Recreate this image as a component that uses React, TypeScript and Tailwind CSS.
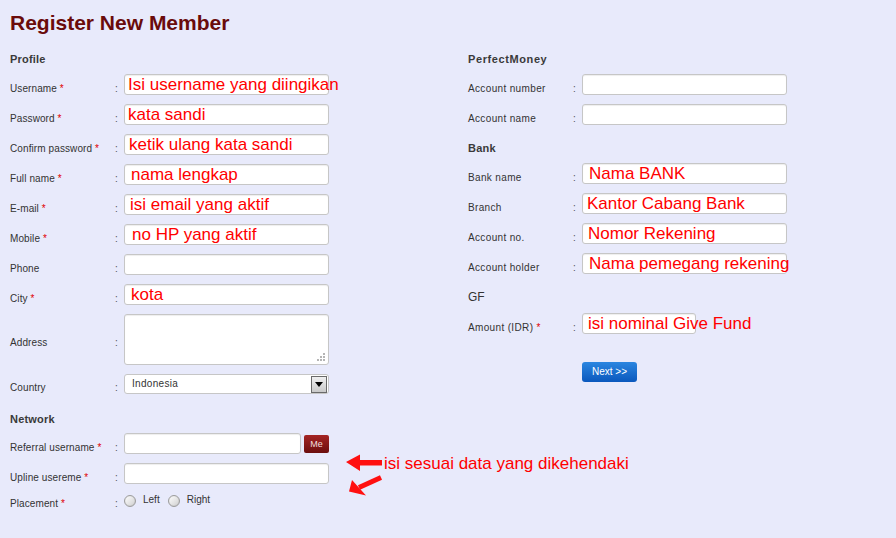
import React from "react";

type Row = {
  label: string;
  req?: boolean;
  note?: string;
  notePad?: string;
};

const Star = () => <span className="text-[#e00000]"> *</span>;

function Colon() {
  return <span className="w-[9px] shrink-0 text-[10px] leading-[13px] text-[#555]">:</span>;
}

function TextBox({ note, notePad, w = "w-[205px]" }: { note?: string; notePad?: string; w?: string }) {
  return (
    <div
      className={`${w} h-[21px] shrink-0 flex items-center rounded-[3px] border border-[#c6c6c6] bg-white shadow-[inset_0_1px_1px_rgba(0,0,0,0.07)]`}
    >
      {note ? (
        <span
          className={`${notePad ?? "pl-[4px]"} whitespace-nowrap text-[17px] leading-[17px] text-[#ff0000] font-['Liberation_Sans',Arial,sans-serif]`}
        >
          {note}
        </span>
      ) : null}
    </div>
  );
}

function FieldRow({ r, labelCls }: { r: Row; labelCls: string }) {
  return (
    <div className="flex items-end">
      <span className={`w-[105px] shrink-0 ${labelCls}`}>
        {r.label}
        {r.req ? <Star /> : null}
      </span>
      <Colon />
      <TextBox note={r.note} notePad={r.notePad} />
    </div>
  );
}

const leftRows: Row[] = [
  { label: "Username", req: true, note: "Isi username yang diingikan", notePad: "pl-[3px]" },
  { label: "Password", req: true, note: "kata sandi", notePad: "pl-[3px]" },
  { label: "Confirm password", req: true, note: "ketik ulang kata sandi", notePad: "pl-[4px]" },
  { label: "Full name", req: true, note: "nama lengkap", notePad: "pl-[6px]" },
  { label: "E-mail", req: true, note: "isi email yang aktif", notePad: "pl-[5px]" },
  { label: "Mobile", req: true, note: "no HP yang aktif", notePad: "pl-[7px]" },
  { label: "Phone" },
  { label: "City", req: true, note: "kota", notePad: "pl-[6px]" },
];

const pmRows: Row[] = [{ label: "Account number" }, { label: "Account name" }];

const bankRows: Row[] = [
  { label: "Bank name", note: "Nama BANK", notePad: "pl-[6px]" },
  { label: "Branch", note: "Kantor Cabang Bank", notePad: "pl-[4px]" },
  { label: "Account no.", note: "Nomor Rekening", notePad: "pl-[5px]" },
  { label: "Account holder", note: "Nama pemegang rekening", notePad: "pl-[6px]" },
];

const leftLabel = "text-[10px] leading-[13px] text-[#333] tracking-[0.1px]";
const rightLabel = "text-[10px] leading-[13px] text-[#333] tracking-[0.35px]";
const header = "h-[14px] text-[11px] leading-[14px] font-bold text-[#3a3a3a] tracking-[0.2px]";

function Radio({ text }: { text: string }) {
  return (
    <span className="flex items-center">
      <span className="w-[12px] h-[12px] rounded-full border border-[#9c9c9c] bg-gradient-to-br from-[#ffffff] to-[#cfcfcf] shadow-[inset_0_0_1px_rgba(0,0,0,0.2)]" />
      <span className="ml-[7px] text-[10px] leading-[12px] text-[#333] -mt-[3px]">{text}</span>
    </span>
  );
}

export default function App() {
  return (
    <div className="relative w-[896px] h-[538px] overflow-hidden bg-[#e8eafb] font-['Liberation_Sans',Arial,sans-serif] text-[#333]">
      <h1 className="pl-[10px] pt-[10px] text-[21px] leading-[26px] font-bold text-[#6a0b0b]">Register New Member</h1>

      <div className="flex pl-[10px] mt-[16px]">
        {/* Left column */}
        <div className="w-[458px] shrink-0 flex flex-col">
          <div className={header}>Profile</div>
          <div className="mt-[8px] flex flex-col gap-[9px]">
            {leftRows.map((r) => (
              <FieldRow key={r.label} r={r} labelCls={leftLabel} />
            ))}
            <div className="flex items-center">
              <span className={`w-[105px] shrink-0 mt-[6px] ${leftLabel}`}>Address</span>
              <span className="mt-[6px] w-[9px] shrink-0 text-[10px] leading-[13px] text-[#555]">:</span>
              <div className="relative w-[205px] h-[51px] rounded-[3px] border border-[#c6c6c6] bg-white shadow-[inset_0_1px_1px_rgba(0,0,0,0.07)]">
                <svg className="absolute right-[2px] bottom-[2px]" width="10" height="10" viewBox="0 0 10 10">
                  <g fill="#b5b5b5">
                    <rect x="7" y="1" width="2" height="2" />
                    <rect x="4" y="4" width="2" height="2" />
                    <rect x="7" y="4" width="2" height="2" />
                    <rect x="1" y="7" width="2" height="2" />
                    <rect x="4" y="7" width="2" height="2" />
                    <rect x="7" y="7" width="2" height="2" />
                  </g>
                </svg>
              </div>
            </div>
            <div className="flex items-end">
              <span className={`w-[105px] shrink-0 ${leftLabel}`}>Country</span>
              <Colon />
              <div className="w-[205px] h-[20px] flex items-center justify-between rounded-[3px] border border-[#c6c6c6] bg-white">
                <span className="pl-[7px] text-[10px] leading-[12px] text-[#333] tracking-[0.3px]">Indonesia</span>
                <span className="mr-[1px] w-[16px] h-[17px] flex items-center justify-center border border-[#6a6a6a] bg-gradient-to-b from-[#f0f0f0] to-[#c9c9c9]">
                  <svg width="8" height="5" viewBox="0 0 8 5">
                    <path d="M0 0 H8 L4 5 Z" fill="#000" />
                  </svg>
                </span>
              </div>
            </div>
          </div>

          <div className={`${header} mt-[18px]`}>Network</div>
          <div className="mt-[7px] flex flex-col gap-[9px]">
            <div className="flex items-end">
              <span className={`w-[105px] shrink-0 ${leftLabel}`}>
                Referral username<Star />
              </span>
              <Colon />
              <div className="flex items-center">
                <TextBox w="w-[177px]" />
                <button className="ml-[3px] w-[25px] h-[18px] rounded-[2px] bg-gradient-to-b from-[#a42424] to-[#6c0e0e] text-[9px] leading-[18px] text-[#f1dede] text-center">
                  Me
                </button>
              </div>
            </div>
            <div className="flex items-end">
              <span className={`w-[105px] shrink-0 ${leftLabel}`}>
                Upline usereme<Star />
              </span>
              <Colon />
              <TextBox />
            </div>
            <div className="flex items-end h-[17px]">
              <span className={`w-[105px] shrink-0 ${leftLabel}`}>
                Placement<Star />
              </span>
              <Colon />
              <div className="self-start pt-[2px] flex items-center gap-[8px]">
                <Radio text="Left" />
                <Radio text="Right" />
              </div>
            </div>
          </div>
        </div>

        {/* Right column */}
        <div className="flex flex-col">
          <div className={`${header} tracking-[0.6px]`}>PerfectMoney</div>
          <div className="mt-[8px] flex flex-col gap-[9px]">
            {pmRows.map((r) => (
              <FieldRow key={r.label} r={r} labelCls={rightLabel} />
            ))}
          </div>
          <div className={`${header} mt-[16px]`}>Bank</div>
          <div className="mt-[8px] flex flex-col gap-[9px]">
            {bankRows.map((r) => (
              <FieldRow key={r.label} r={r} labelCls={rightLabel} />
            ))}
          </div>
          <div className="h-[14px] mt-[16px] text-[12px] leading-[14px] text-[#333]">GF</div>
          <div className="mt-[9px] flex items-end">
            <span className={`w-[105px] shrink-0 ${rightLabel}`}>
              Amount (IDR)<Star />
            </span>
            <Colon />
            <TextBox w="w-[114px]" note="isi nominal Give Fund" notePad="pl-[5px]" />
          </div>
          <div className="mt-[24px] pl-[114px]">
            <button className="w-[55px] h-[20px] rounded-[3px] bg-gradient-to-b from-[#2b86e0] to-[#0a58bd] text-[10px] leading-[20px] text-white text-center">
              Next &gt;&gt;
            </button>
          </div>
        </div>
      </div>

      {/* Annotation overlay */}
      <svg className="absolute left-0 top-0 pointer-events-none" width="896" height="538" viewBox="0 0 896 538">
        <polygon
          points="346,462 360,454.5 360,460 382,460 382,465.5 360,465.5 360,471"
          fill="#ff1010"
        />
        <line x1="381" y1="477.5" x2="359" y2="487.5" stroke="#ff1010" strokeWidth="5" />
        <polygon points="349,491.5 352,480 366,495.5" fill="#ff1010" />
      </svg>
      <span className="absolute left-[384px] top-[455px] whitespace-nowrap text-[17px] leading-[17px] text-[#ff0000]">
        isi sesuai data yang dikehendaki
      </span>
    </div>
  );
}
